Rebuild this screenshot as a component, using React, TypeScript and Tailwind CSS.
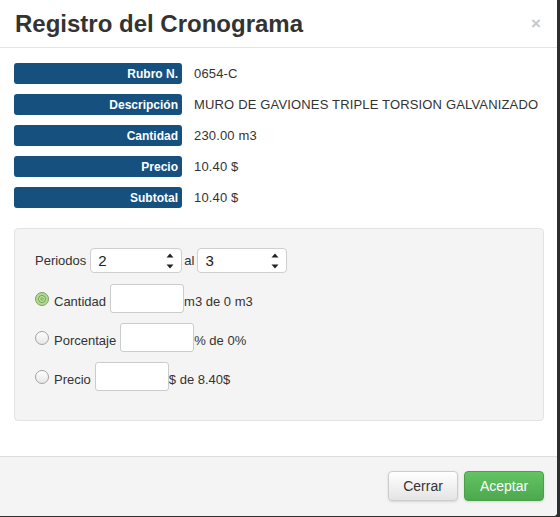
import React from 'react';

const rows = [
    { label: 'Rubro N.', value: '0654-C' },
    { label: 'Descripción', value: 'MURO DE GAVIONES TRIPLE TORSION GALVANIZADO' },
    { label: 'Cantidad', value: '230.00 m3' },
    { label: 'Precio', value: '10.40 $' },
    { label: 'Subtotal', value: '10.40 $' },
];

function Spinner() {
    return (
        <svg width="8" height="16" viewBox="0 0 8 16" className="shrink-0">
            <path d="M0.5 4.5 L4 0.5 L7.5 4.5 Z" fill="#222" />
            <path d="M0.5 11.5 L4 15.5 L7.5 11.5 Z" fill="#222" />
        </svg>
    );
}

function NumberBox({ value, width }: { value: string; width: string }) {
    return (
        <div className={`${width} h-[25px] bg-white border border-[#cfcfcf] rounded-[4px] flex items-center justify-between pl-[7px] pr-[7px]`}>
            <span className="text-[15px] text-[#222] leading-none">{value}</span>
            <Spinner />
        </div>
    );
}

function Radio({ checked }: { checked?: boolean }) {
    if (checked) {
        return (
            <div className="w-[14px] h-[14px] rounded-full border border-[#7f9c6a] bg-[#b2da90] flex items-center justify-center shrink-0">
                <div className="w-[8px] h-[8px] rounded-full border border-[#6d9a4e] bg-[#cde9b4] flex items-center justify-center">
                    <div className="w-[4px] h-[4px] rounded-full bg-[#8cc263]" />
                </div>
            </div>
        );
    }
    return <div className="w-[14px] h-[14px] rounded-full border border-[#a3a3a3] bg-gradient-to-b from-white to-[#e6e6e6] shrink-0" />;
}

function OptionRow({ label, suffix, checked }: { label: string; suffix: string; checked?: boolean }) {
    return (
        <div className="flex items-center h-[29px]">
            <Radio checked={checked} />
            <span className="ml-[5px] pt-[6px]">{label}</span>
            <div className="ml-[4px] w-[74px] h-[29px] bg-white border border-[#cccccc] rounded-[3px]" />
            <span className="pt-[6px]">{suffix}</span>
        </div>
    );
}

export default function App() {
    return (
        <div className="w-[560px] h-[517px] bg-[#2e2e2e] font-['Liberation_Sans',Arial,sans-serif] text-[#333]">
            <div className="w-[557px] h-[516px] bg-white rounded-br-[4px] flex flex-col overflow-hidden">
                {/* Header */}
                <div className="h-[48px] border-b border-[#e5e5e5] flex items-center justify-between pl-[15px] pr-[15px] shrink-0">
                    <h1 className="text-[24px] font-bold leading-normal text-[#333]">Registro del Cronograma</h1>
                    <span className="text-[17px] font-bold text-[#c8c8c8] leading-none mr-[1px]">×</span>
                </div>

                {/* Body */}
                <div className="pl-[14px] pr-[13px] pt-[15px] pb-[35px]">
                    <div className="flex flex-col gap-[10px]">
                        {rows.map((row) => (
                            <div key={row.label} className="flex items-center h-[21px]">
                                <div className="w-[168px] h-[21px] bg-[#15507f] rounded-[3px] flex items-center justify-end pr-[4px] text-white text-[12px] font-bold">
                                    {row.label}
                                </div>
                                <span className="ml-[12px] text-[13px] tracking-[0.16px] text-[#333]">{row.value}</span>
                            </div>
                        ))}
                    </div>

                    <div className="mt-[20px] w-[530px] bg-[#f4f4f4] border border-[#e3e3e3] rounded-[4px] pl-[20px] pt-[19px] pb-[29px] text-[13px] text-[#333]">
                        <div className="flex items-center h-[25px]">
                            <span>Periodos</span>
                            <div className="ml-[4px]">
                                <NumberBox value="2" width="w-[92px]" />
                            </div>
                            <span className="ml-[2px] mr-[3px]">al</span>
                            <NumberBox value="3" width="w-[90px]" />
                        </div>
                        <div className="mt-[11px] flex flex-col gap-[10px]">
                            <OptionRow label="Cantidad" suffix="m3 de 0 m3" checked />
                            <OptionRow label="Porcentaje" suffix="% de 0%" />
                            <OptionRow label="Precio" suffix="$ de 8.40$" />
                        </div>
                    </div>
                </div>

                {/* Footer */}
                <div className="flex-1 border-t border-[#dddddd] bg-[#f4f4f4] flex justify-end items-start gap-[6px] pt-[14px] pr-[13px]">
                    <button className="w-[70px] h-[30px] rounded-[4px] border border-[#cccccc] bg-gradient-to-b from-white to-[#e4e4e4] text-[14px] text-[#333] shadow-sm">
                        Cerrar
                    </button>
                    <button className="w-[80px] h-[30px] rounded-[4px] border border-[#4a9f4a] bg-gradient-to-b from-[#62c462] to-[#4ea84e] text-[14px] text-white shadow-sm">
                        Aceptar
                    </button>
                </div>
            </div>
        </div>
    );
}
